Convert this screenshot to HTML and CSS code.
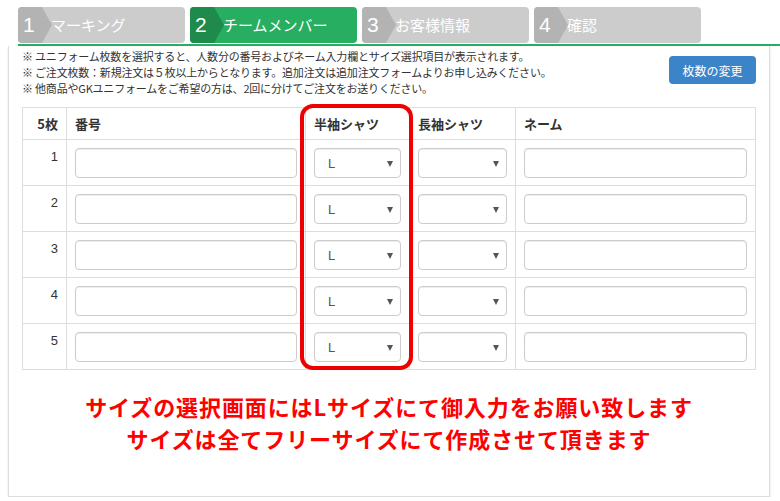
FILE: index.html
```html
<!DOCTYPE html>
<html lang="ja">
<head>
    <meta charset="UTF-8">
    <meta name="viewport" content="width=device-width, initial-scale=1.0">
    <title>チームメンバー入力</title>
    <link rel="stylesheet" href="styles.css">
</head>
<body>
    <!-- ステップ表示 -->
    <div class="steps">
        <div class="step"><span class="num">1</span><span class="label">マーキング</span></div>
        <div class="step active"><span class="num">2</span><span class="label">チームメンバー</span></div>
        <div class="step"><span class="num">3</span><span class="label">お客様情報</span></div>
        <div class="step"><span class="num">4</span><span class="label">確認</span></div>
    </div>

    <div class="panel">
        <!-- 注意書き + 枚数変更ボタン -->
        <div class="top">
            <div class="notes">
                <p>※ ユニフォーム枚数を選択すると、人数分の番号およびネーム入力欄とサイズ選択項目が表示されます。</p>
                <p>※ ご注文枚数：新規注文は５枚以上からとなります。追加注文は追加注文フォームよりお申し込みください。</p>
                <p>※ 他商品やGKユニフォームをご希望の方は、2回に分けてご注文をお送りください。</p>
            </div>
            <button class="btn-change">枚数の変更</button>
        </div>

        <!-- メンバー表 -->
        <div class="table-wrap">
            <table class="members">
                <colgroup>
                    <col class="c-no">
                    <col class="c-number">
                    <col class="c-short">
                    <col class="c-long">
                    <col class="c-name">
                </colgroup>
                <thead>
                    <tr>
                        <th class="no">5枚</th>
                        <th>番号</th>
                        <th>半袖シャツ</th>
                        <th>長袖シャツ</th>
                        <th>ネーム</th>
                    </tr>
                </thead>
                <tbody id="rows"></tbody>
            </table>
            <!-- 半袖シャツ列の赤枠 -->
            <div class="highlight"></div>
        </div>

        <div class="message">
            <p>サイズの選択画面にはLサイズにて御入力をお願い致します</p>
            <p>サイズは全てフリーサイズにて作成させて頂きます</p>
        </div>
    </div>

    <script>
        // 5行分の入力行を作る
        const rows = document.getElementById('rows');
        for (let i = 1; i <= 5; i++) {
            const tr = document.createElement('tr');
            tr.innerHTML =
                '<td class="no">' + i + '</td>' +
                '<td><input type="text" class="field"></td>' +
                '<td><span class="sel"><select class="field"><option>L</option></select></span></td>' +
                '<td><span class="sel"><select class="field"><option></option></select></span></td>' +
                '<td><input type="text" class="field"></td>';
            rows.appendChild(tr);
        }
    </script>
</body>
</html>
```

FILE: styles.css
```css
/* 全体 */
body {
    margin: 0;
    background-color: #ffffff;
    font-family: "Noto Sans CJK JP", sans-serif;
    color: #333;
}

/* ステップ表示 */
.steps {
    display: flex;
    gap: 5px;
    margin-left: 18px;
    padding-top: 7px;
    padding-bottom: 1px;
    border-bottom: 2px solid #27ae60;
}

.step {
    display: flex;
    align-items: center;
    width: 167px;
    height: 36px;
    background-color: #cccccc;
    border-radius: 4px;
    overflow: hidden;
    color: #ffffff;
}

.step .num {
    position: relative;
    width: 19px;
    height: 36px;
    padding-left: 5px;
    background-color: #b3b3b3;
    font-family: "Liberation Sans", sans-serif;
    font-size: 21px;
    line-height: 36px;
}

/* 番号の右側の矢印 */
.step .num::after {
    content: "";
    position: absolute;
    top: 0;
    left: 24px;
    border-top: 18px solid transparent;
    border-bottom: 18px solid transparent;
    border-left: 10px solid #b3b3b3;
}

.step .label {
    margin-left: 9px;
    font-size: 15px;
    line-height: 36px;
}

.step.active {
    background-color: #27ae60;
}

.step.active .num {
    background-color: #1e8a4b;
}

.step.active .num::after {
    border-left-color: #1e8a4b;
}

/* パネル */
.panel {
    height: 448px;
    margin: 0 10px 0 8px;
    padding: 2px 13px 0;
    border: 1px solid #dddddd;
    border-top: none;
    box-shadow: 0 1px 2px rgba(0, 0, 0, 0.12);
}

.top {
    display: flex;
    justify-content: space-between;
    align-items: flex-start;
}

.notes p {
    margin: 0;
    font-size: 11px;
    line-height: 16px;
    letter-spacing: -0.2px;
}

.btn-change {
    margin-top: 8px;
    width: 87px;
    height: 28px;
    padding: 0;
    border: none;
    border-radius: 4px;
    background-color: #3c84c8;
    color: #ffffff;
    font-family: "Noto Sans CJK JP", sans-serif;
    font-size: 12px;
}

/* メンバー表 */
.table-wrap {
    position: relative;
    margin-top: 11px;
}

.members {
    width: 100%;
    border-collapse: collapse;
    table-layout: fixed;
}

.c-no { width: 44px; }
.c-number { width: 239px; }
.c-short { width: 104px; }
.c-long { width: 106px; }

.members th,
.members td {
    border: 1px solid #dddddd;
    padding: 8px 8px 7px;
    text-align: left;
    vertical-align: top;
}

.members th {
    height: 31px;
    padding-top: 0;
    padding-bottom: 0;
    vertical-align: middle;
    font-size: 13px;
    font-weight: bold;
}

.members .no {
    text-align: right;
}

.members td.no {
    font-family: "Liberation Sans", sans-serif;
    font-size: 13px;
    line-height: 18px;
}

.field {
    box-sizing: border-box;
    display: block;
    width: 100%;
    height: 30px;
    padding: 0 8px;
    border: 1px solid #cccccc;
    border-radius: 4px;
    background-color: #ffffff;
    box-shadow: inset 0 1px 1px rgba(0, 0, 0, 0.075);
    font-family: "Liberation Sans", sans-serif;
    font-size: 13px;
    color: #555;
}

select.field {
    appearance: none;
    -webkit-appearance: none;
    padding-left: 13px;
}

/* セレクトの▼ */
.sel {
    position: relative;
    display: block;
}

.sel::after {
    content: "";
    position: absolute;
    right: 8px;
    top: 13px;
    border-left: 3.5px solid transparent;
    border-right: 3.5px solid transparent;
    border-top: 6px solid #555;
}

/* 半袖シャツ列の赤枠 */
.highlight {
    position: absolute;
    left: 278px;
    top: -3px;
    width: 105px;
    height: 258px;
    border: 4px solid #ee0000;
    border-radius: 13px;
}

/* 下のお知らせ */
.message {
    margin-top: 20px;
    text-align: center;
    color: #ff0000;
    font-size: 22px;
    font-weight: bold;
    letter-spacing: 0.9px;
}

.message p {
    margin: 0;
    line-height: 32px;
}
```
